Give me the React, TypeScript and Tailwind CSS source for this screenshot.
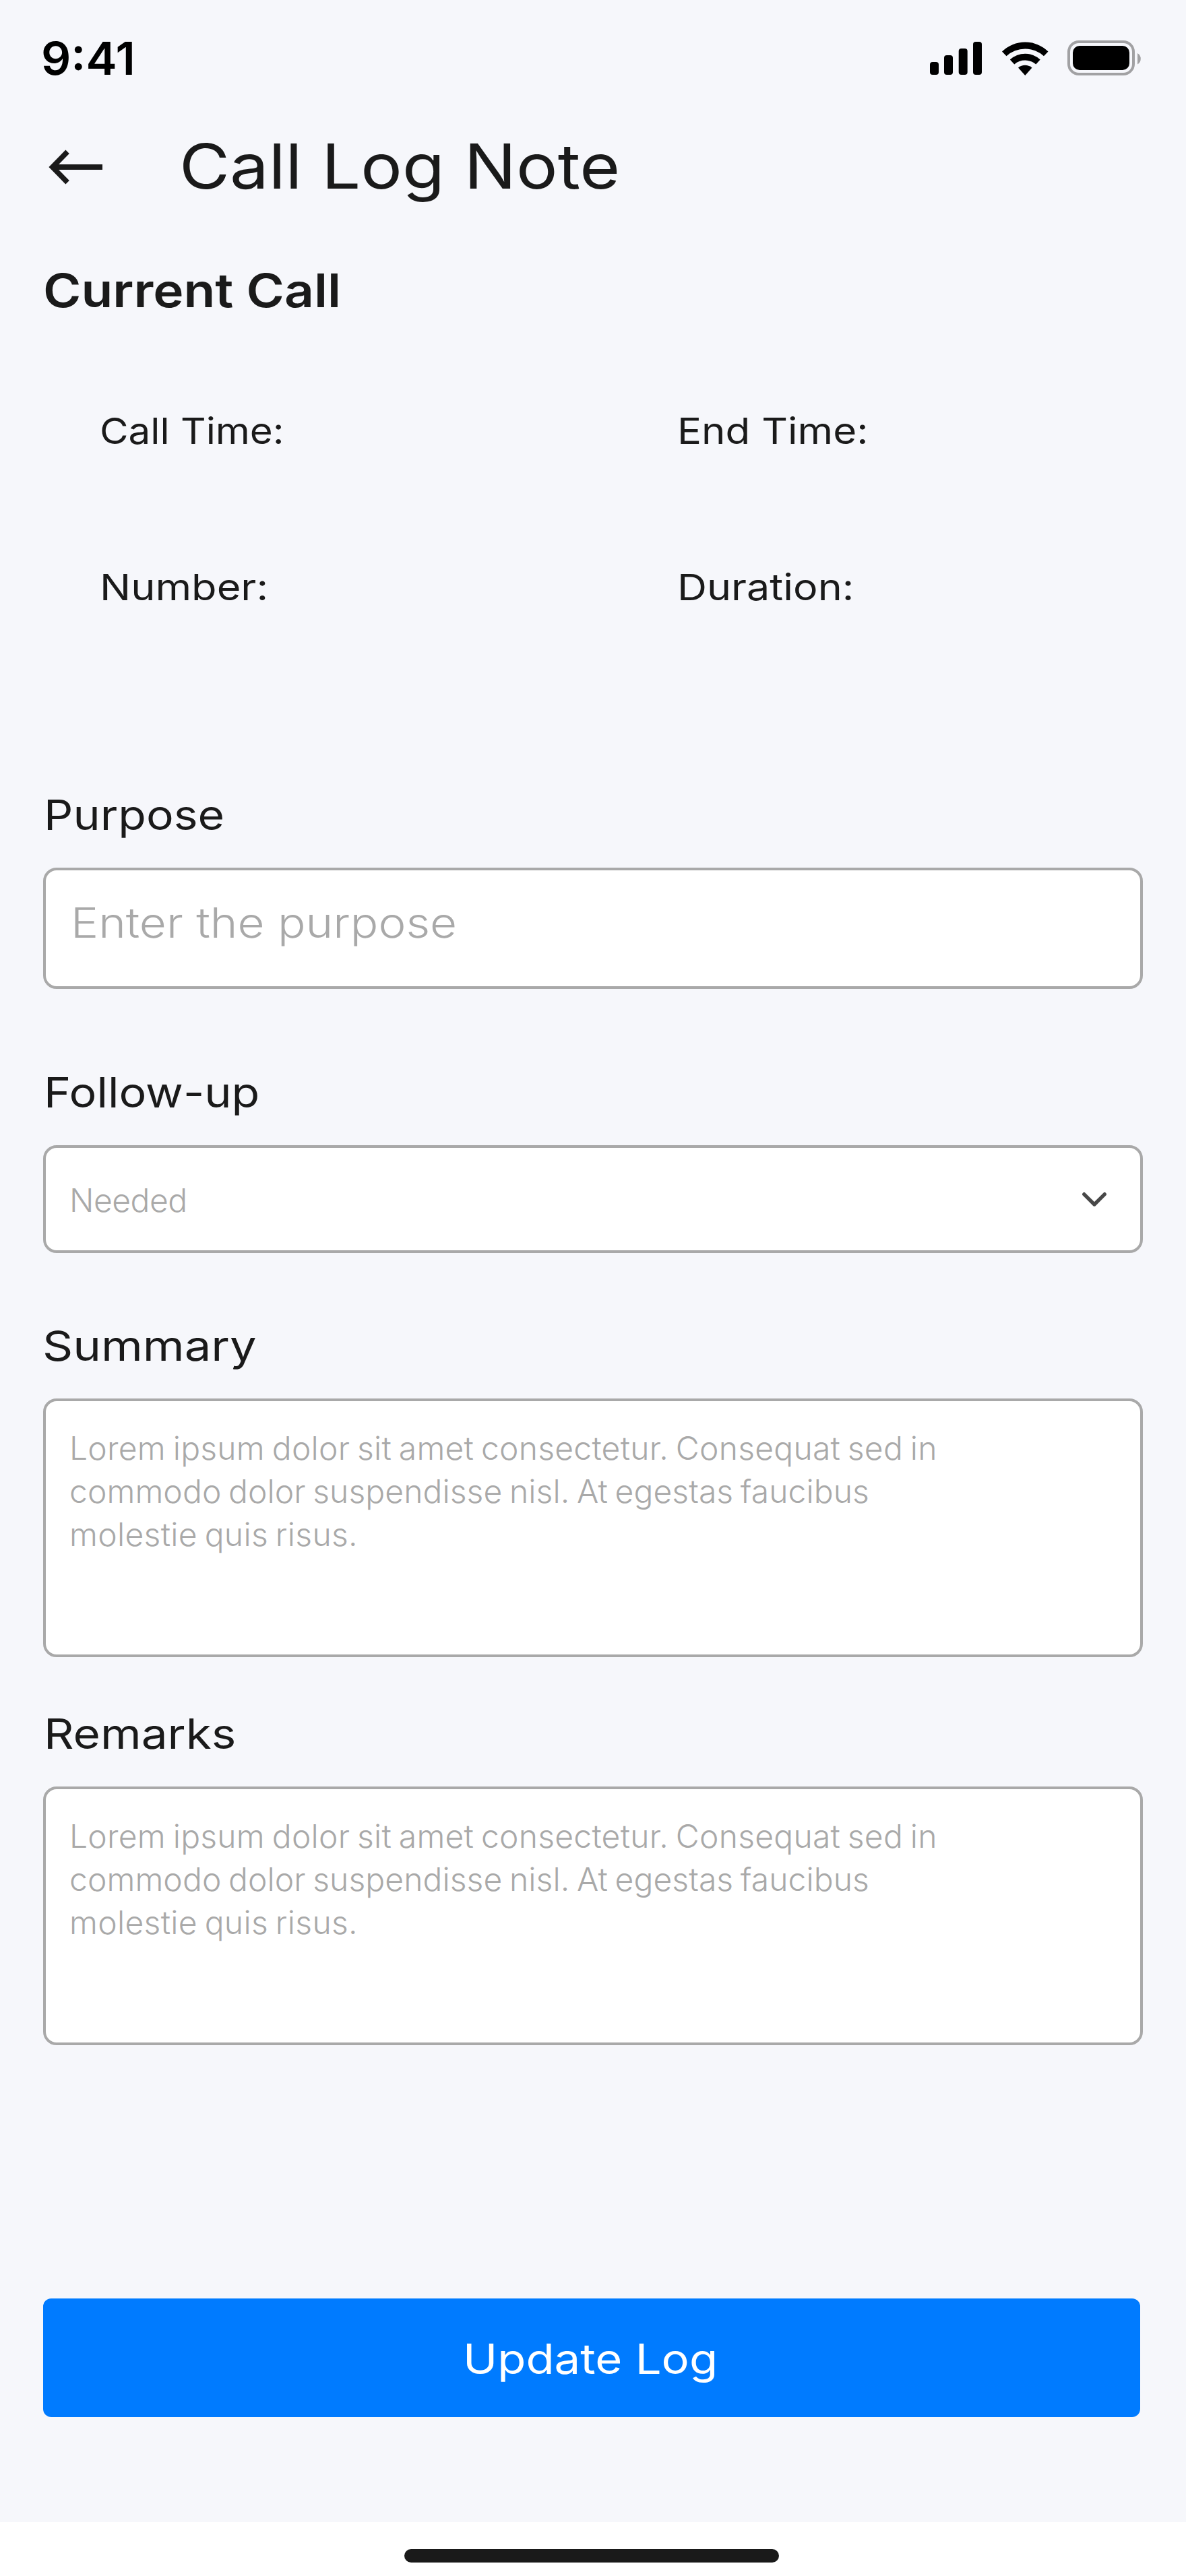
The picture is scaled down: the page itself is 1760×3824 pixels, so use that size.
import type { ReactNode } from "react";

const NOTE_LINES = [
  { text: "Lorem ipsum dolor sit amet consectetur. Consequat sed in", spacing: "tracking-[0.25px]" },
  { text: "commodo dolor suspendisse nisl. At egestas faucibus", spacing: "tracking-[0.08px]" },
  { text: "molestie quis risus.", spacing: "tracking-[0.3px]" },
];

function StatusIcons() {
  return (
    <svg width="314" height="52" viewBox="1380 60 314 52" aria-hidden="true">
      <rect x="1380" y="92" width="13" height="19" rx="4" />
      <rect x="1401" y="82" width="13" height="29" rx="4" />
      <rect x="1422.7" y="72" width="13" height="39" rx="4" />
      <rect x="1444" y="62" width="13" height="49" rx="4" />
      <path d="M1487 76.5A49 49 0 0 1 1555.5 76.5L1549 83.2A41 41 0 0 0 1493.5 83.2Z" />
      <path d="M1498.8 88.5A33 33 0 0 1 1543.7 88.5L1537.3 95.4A25 25 0 0 0 1505.3 95.4Z" />
      <path d="M1511 100.5A16 16 0 0 1 1531.5 100.5L1521.3 112Z" />
      <rect x="1586" y="62" width="96" height="48" rx="15" fill="none" stroke="#a1a1a3" strokeWidth="4" />
      <rect x="1592" y="68" width="84" height="36" rx="10" />
      <path d="M1688 79A9.5 9.5 0 0 1 1688 95.5Z" fill="#a1a1a3" />
    </svg>
  );
}

function BackArrow() {
  return (
    <svg className="mt-1" width="84" height="56" viewBox="70 220 84 56" fill="none" stroke="#1a1a1a" strokeWidth="7.7">
      <path d="M100.1 225.3L77.8 248L100.1 270.7" />
      <path d="M78 248H152" strokeWidth="8" />
    </svg>
  );
}

function Label({ className, children }: { className: string; children: ReactNode }) {
  return (
    <div className="flex h-20">
      <span className={`origin-left text-[61.6px] leading-[80px] font-[440] whitespace-nowrap ${className}`}>
        {children}
      </span>
    </div>
  );
}

function Box({ className, children }: { className: string; children: ReactNode }) {
  return (
    <div className={`mt-[38px] w-full rounded-[20px] border-4 border-[#a9a9a9] bg-white text-[#a9a9a9] ${className}`}>
      {children}
    </div>
  );
}

function Note() {
  return (
    <Box className="h-96 pt-[38px] pl-[35px]">
      {NOTE_LINES.map((line) => (
        <p
          key={line.text}
          className={`text-[48px] leading-[64px] font-[360] whitespace-nowrap [word-spacing:-3px] ${line.spacing}`}
        >
          {line.text}
        </p>
      ))}
    </Box>
  );
}

export default function App() {
  return (
    <div className="flex h-[3824px] w-[1760px] flex-col bg-[#f6f7fb] font-[Inter,sans-serif] text-[#1a1a1a]">
      <div className="flex h-[172px] items-center justify-between pr-[66px] pl-[61px] text-black">
        <span className="origin-left scale-x-[1.02] pb-px text-[68px] leading-[80px] font-semibold">9:41</span>
        <StatusIcons />
      </div>

      <header className="flex h-[148px] items-center pl-[70px]">
        <BackArrow />
        <h1 className="ml-[112px] origin-left scale-x-[1.11] text-[92.5px] leading-[112px] font-normal whitespace-nowrap">
          Call Log Note
        </h1>
      </header>

      <main className="flex flex-col px-16">
        <div className="mt-[69px] flex">
          <h2 className="origin-left scale-x-[1.105] text-[69.3px] leading-[84px] font-semibold">Current Call</h2>
        </div>

        <div className="mt-[135px] grid grid-cols-[857px_1fr] justify-items-start gap-y-[168px] pl-[84px] text-[54px] leading-[64px] font-[440]">
          <span className="origin-left scale-x-[1.08]">Call Time:</span>
          <span className="origin-left scale-x-[1.112]">End Time:</span>
          <span className="origin-left scale-x-[1.135]">Number:</span>
          <span className="origin-left scale-x-[1.13]">Duration:</span>
        </div>

        <section className="mt-[266px]">
          <Label className="ml-px scale-x-[1.104]">Purpose</Label>
          <Box className="h-[180px] pt-[38px] pl-[37px]">
            <span className="block origin-left scale-x-[1.122] text-[61.6px] leading-[80px] font-[340]">
              Enter the purpose
            </span>
          </Box>
        </section>

        <section className="mt-[114px]">
          <Label className="ml-px scale-x-[1.107]">Follow-up</Label>
          <Box className="flex h-40 justify-between pt-[46px] pr-[50px] pl-[35px]">
            <span className="text-[48px] leading-[64px] font-[360] tracking-[-0.5px]">Needed</span>
            <svg className="mt-5" width="36" height="22" viewBox="1606 1770 36 22" fill="none" stroke="#484848" strokeWidth="5.4" strokeLinecap="round" strokeLinejoin="round">
              <path d="M1608.8 1772.8L1624 1788L1639.2 1772.8" />
            </svg>
          </Box>
        </section>

        <section className="mt-[98px]">
          <Label className="-ml-px scale-x-[1.146]">Summary</Label>
          <Note />
        </section>

        <section className="mt-[74px]">
          <Label className="ml-px scale-x-[1.125]">Remarks</Label>
          <Note />
        </section>

        <button className="mt-[376px] flex h-44 w-[1628px] items-center justify-center rounded-xl bg-[#007bff] pt-[3px] pr-[3px] text-white">
          <span className="scale-x-[1.118] text-[61.6px] leading-[80px] font-[440]">Update Log</span>
        </button>
      </main>

      <footer className="mt-auto flex h-20 justify-center bg-white pt-10 pr-1">
        <div className="h-5 w-[556px] rounded-full bg-[#1a1a1a]" />
      </footer>
    </div>
  );
}
